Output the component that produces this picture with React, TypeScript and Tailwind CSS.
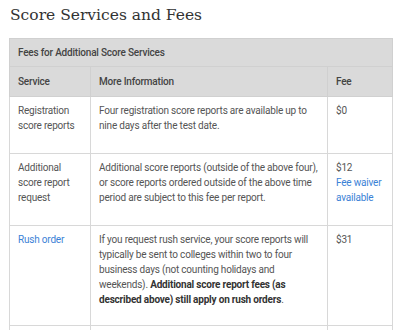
const rows = [
  {
    h: "h-[57px]",
    service: "Registration score reports",
    info: <>Four registration score reports are available up to nine days after the test date.</>,
    fee: <>$0</>,
  },
  {
    h: "h-[72px]",
    service: "Additional score report request",
    info: (
      <>
        Additional score reports (outside of the above four), or score reports ordered outside of the above time
        period are subject to this fee per report.
      </>
    ),
    fee: (
      <>
        <div>$12</div>
        <a className="text-[#3b82d6]">Fee waiver available</a>
      </>
    ),
  },
  {
    h: "h-[100px]",
    service: <a className="text-[#3b82d6]">Rush order</a>,
    info: (
      <>
        If you request rush service, your score reports will typically be sent to colleges within two to four
        business days (not counting holidays and weekends).{" "}
        <strong className="font-bold text-[#333]">
          Additional score report fees (as described above) still apply on rush orders
        </strong>
        .
      </>
    ),
    fee: <>$31</>,
  },
];

export default function App() {
  return (
    <div className="h-[330px] w-[400px] overflow-hidden bg-white font-['Roboto',sans-serif]">
      <h1 className="px-[10px] pt-[3px] font-['DejaVu_Serif',serif] text-[15.5px] leading-[24px] text-[#333]">
        Score Services and Fees
      </h1>
      <table className="ml-[9px] mt-[11px] w-[383px] table-fixed border-collapse text-[10px] leading-[15px] tracking-[-0.2px] text-[#555]">
        <colgroup>
          <col className="w-[81px]" />
          <col className="w-[237px]" />
          <col className="w-[65px]" />
        </colgroup>
        <thead>
          <tr>
            <th
              colSpan={3}
              className="h-[28px] border border-[#d0d0d0] bg-[#dadada] px-[8px] text-left font-medium text-[#444]"
            >
              Fees for Additional Score Services
            </th>
          </tr>
          <tr>
            <th className="h-[30px] border border-[#d0d0d0] bg-[#dadada] px-[8px] text-left font-medium text-[#444]">
              Service
            </th>
            <th className="border border-[#d0d0d0] bg-[#dadada] px-[8px] text-left font-medium text-[#444]">
              More Information
            </th>
            <th className="border border-[#d0d0d0] bg-[#dadada] px-[8px] text-left font-medium text-[#444]">
              Fee
            </th>
          </tr>
        </thead>
        <tbody>
          {rows.map((r, i) => (
            <tr key={i} className={r.h}>
              <td className="border border-[#d8d8d8] px-[8px] pt-[6px] align-top">{r.service}</td>
              <td className="border border-[#d8d8d8] pl-[8px] pr-[4px] pt-[6px] align-top">{r.info}</td>
              <td className="border border-[#d8d8d8] px-[8px] pt-[6px] align-top">{r.fee}</td>
            </tr>
          ))}
          <tr>
            <td className="h-[40px] border border-[#d8d8d8]" />
            <td className="border border-[#d8d8d8]" />
            <td className="border border-[#d8d8d8]" />
          </tr>
        </tbody>
      </table>
    </div>
  );
}
